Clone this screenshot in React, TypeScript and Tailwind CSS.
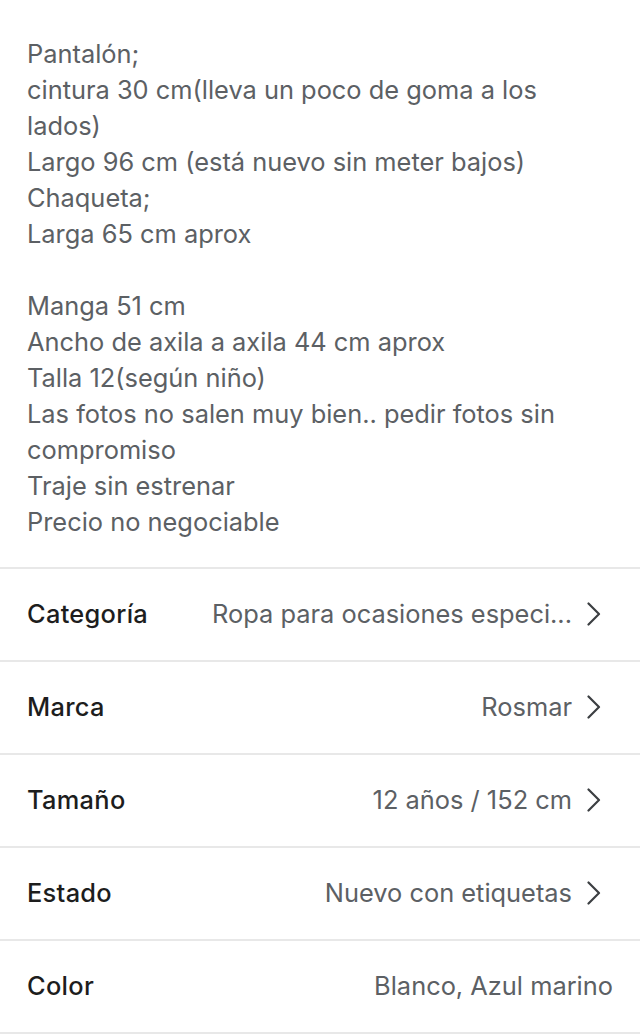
const lines = [
  "Pantalón;",
  "cintura 30 cm(lleva un poco de goma a los lados)",
  "Largo 96 cm (está nuevo sin meter bajos)",
  "Chaqueta;",
  "Larga 65 cm aprox",
  "",
  "Manga 51 cm",
  "Ancho de axila a axila 44 cm aprox",
  "Talla 12(según niño)",
  "Las fotos no salen muy bien.. pedir fotos sin compromiso",
  "Traje sin estrenar",
  "Precio no negociable",
];

const details = [
  { label: "Categoría", value: "Ropa para ocasiones especi...", arrow: true },
  { label: "Marca", value: "Rosmar", arrow: true },
  { label: "Tamaño", value: "12 años / 152 cm", arrow: true },
  { label: "Estado", value: "Nuevo con etiquetas", arrow: true },
  { label: "Color", value: "Blanco, Azul marino", arrow: false },
];

const Chevron = () => (
  <svg width="14" height="24" viewBox="0 0 14 24" fill="none" className="mr-[12px]">
    <path d="M1.5 1.5 L12 12 L1.5 22.5" stroke="#3c3f42" strokeWidth="2.2" strokeLinecap="round" strokeLinejoin="round" />
  </svg>
);

export default function App() {
  return (
    <div className="w-[640px] h-[1036px] bg-white overflow-hidden font-['Inter',sans-serif]">
      <div className="pl-[27px] pr-[50px] pt-9 pb-[27px] text-[25.4px] leading-[36px] text-[#5c6064]">
        {lines.map((line, i) => (
          <p key={i} className="min-h-[36px]">{line}</p>
        ))}
      </div>
      <div className="border-t-2 border-[#e8e8e8]">
        {details.map((d) => (
          <div
            key={d.label}
            className="flex items-center justify-between h-[93px] pl-[27px] pr-[27px] border-b-2 border-[#e8e8e8]"
          >
            <span className="text-[25.4px] font-medium text-[#1d1d1d] tracking-[0.3px]">{d.label}</span>
            <span className="flex items-center gap-[15px] text-[25.4px] text-[#5c6064]">
              {d.value}
              {d.arrow && <Chevron />}
            </span>
          </div>
        ))}
      </div>
    </div>
  );
}
